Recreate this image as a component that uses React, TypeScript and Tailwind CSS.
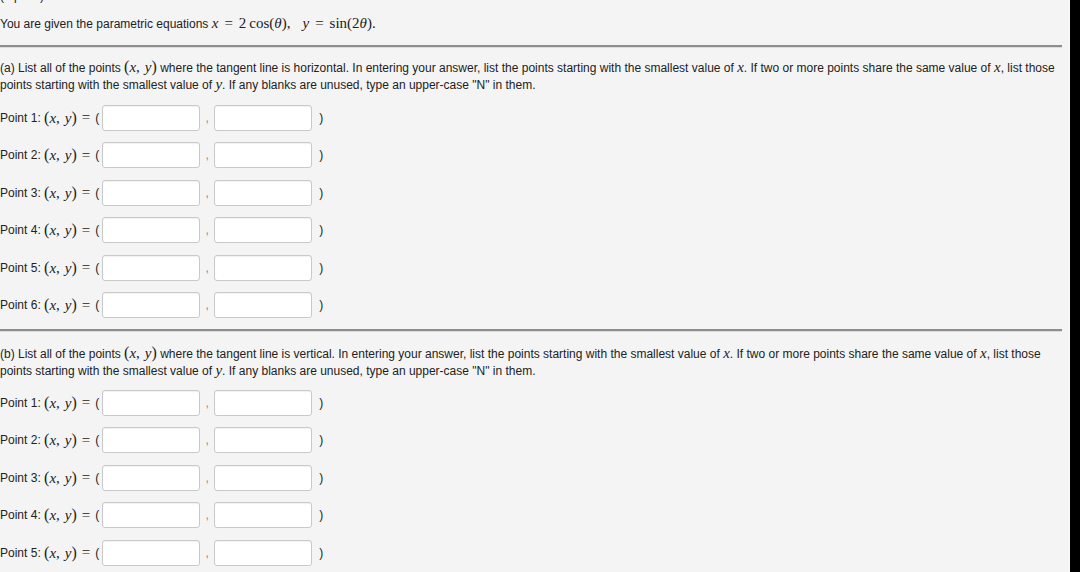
import React from "react";

const sans = { fontFamily: '"Liberation Sans", Arial, sans-serif' };

function MI({ children }: { children: React.ReactNode }) {
  return (
    <span className="italic" style={{ fontFamily: '"Liberation Serif", "DejaVu Serif", serif' }}>
      {children}
    </span>
  );
}

function M({ children }: { children: React.ReactNode }) {
  return (
    <span className="text-[15px] leading-none" style={{ fontFamily: '"Liberation Serif", "DejaVu Serif", serif' }}>
      {children}
    </span>
  );
}

function XY() {
  return (
    <M>
      <span className="text-[16px]">(</span>
      <MI>x</MI>,<span className="inline-block w-[5px]" />
      <MI>y</MI>
      <span className="text-[16px]">)</span>
    </M>
  );
}

function Row({ n }: { n: number }) {
  return (
    <div className="h-[37.5px] flex items-center text-[12px] text-[#222]">
      <span>Point {n}:&nbsp;</span>
      <XY />
      <M>
        <span className="mx-[5px]">=</span>
      </M>
      <span className="mr-[3px]">(</span>
      <div className="w-[98px] h-[26px] bg-white border border-[#c9c9c9] rounded-[3px] shadow-[inset_0_1px_1px_rgba(0,0,0,0.06)]" />
      <span className="w-[14px] text-center text-[#888]">,</span>
      <div className="w-[98px] h-[26px] bg-white border border-[#c9c9c9] rounded-[3px] shadow-[inset_0_1px_1px_rgba(0,0,0,0.06)]" />
      <span className="ml-[7px]">)</span>
    </div>
  );
}

function Para({ label, kind }: { label: string; kind: string }) {
  return (
    <div className="text-[12px] leading-[17px] text-[#222]">
      ({label}) List all of the points <XY /> where the tangent line is {kind}. In entering your answer, list the
      points starting with the smallest value of <M><MI>x</MI></M>. If two or more points share the same value of{" "}
      <M><MI>x</MI></M>, list those points starting with the smallest value of <M><MI>y</MI></M>. If any blanks are
      unused, type an upper-case "N" in them.
    </div>
  );
}

function Rule() {
  return <div className="h-[3px] border-t-2 border-t-[#8e8e8e] border-b border-b-[#dcdcdc]" />;
}

export default function App() {
  return (
    <div className="w-[1080px] h-[572px] bg-black flex overflow-hidden" style={sans}>
      <div className="w-[1070px] h-full bg-[#f4f4f4] border-r border-r-[#fafafa] overflow-hidden">
        <div className="w-[1062px]">
          <div className="-mt-[13px] h-[18px] leading-[18px] text-[12px] text-[#222]">(1 point)</div>
          <div className="mt-[10px] h-[18px] leading-[18px] text-[12px] text-[#222]">
            You are given the parametric equations{" "}
            <M>
              <MI>x</MI>
              <span className="mx-[6px]">=</span>2&thinsp;cos(<MI>θ</MI>),<span className="inline-block w-[12px]" />
              <MI>y</MI>
              <span className="mx-[6px]">=</span>sin(2<MI>θ</MI>).
            </M>
          </div>
          <div className="mt-[12px]">
            <Rule />
          </div>
          <div className="mt-[11px]">
            <Para label="a" kind="horizontal" />
          </div>
          <div className="mt-[5px]">
            {[1, 2, 3, 4, 5, 6].map((n) => (
              <Row key={n} n={n} />
            ))}
          </div>
          <div className="mt-[5px]">
            <Rule />
          </div>
          <div className="mt-[13px]">
            <Para label="b" kind="vertical" />
          </div>
          <div className="mt-[4px]">
            {[1, 2, 3, 4, 5].map((n) => (
              <Row key={n} n={n} />
            ))}
          </div>
        </div>
      </div>
    </div>
  );
}
